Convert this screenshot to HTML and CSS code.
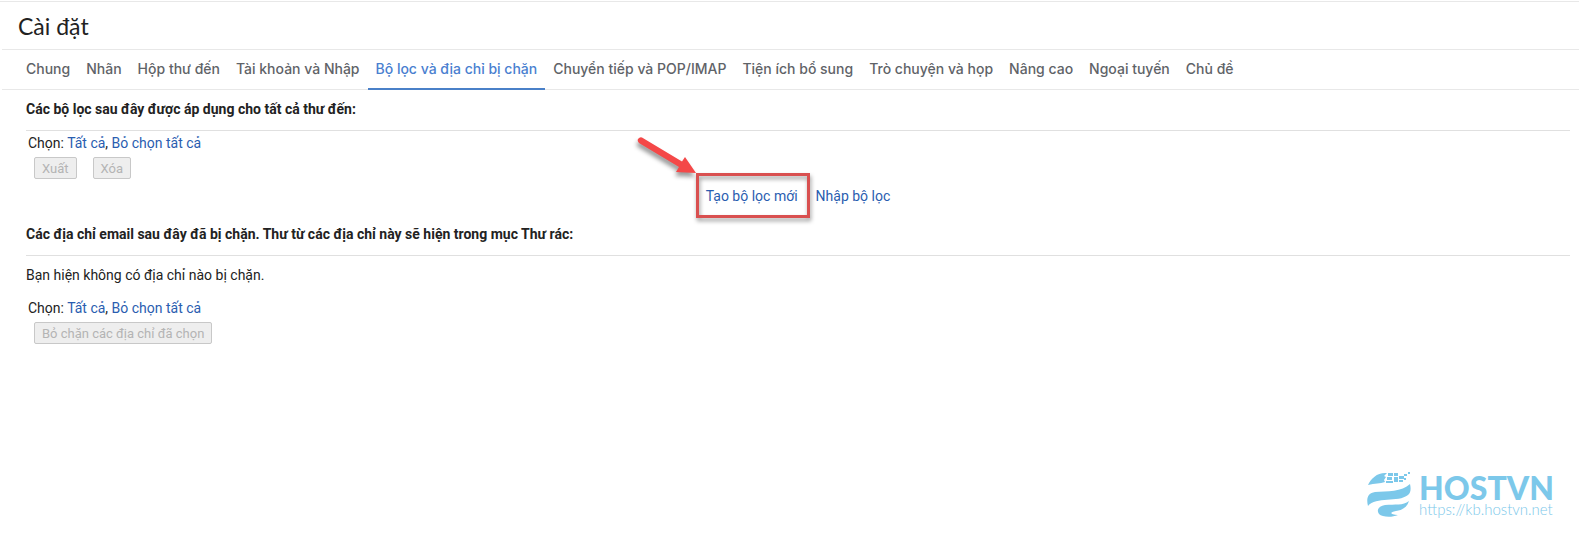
FILE: index.html
```html
<!DOCTYPE html>
<html lang="vi">
<head>
    <meta charset="UTF-8">
    <meta name="viewport" content="width=device-width, initial-scale=1.0">
    <title>Cài đặt</title>
    <link rel="stylesheet" href="styles.css">
</head>
<body>
    <div class="settings">
        <h1>Cài đặt</h1>

        <nav class="tabs">
            <a href="#chung">Chung</a>
            <a href="#nhan">Nhãn</a>
            <a href="#hop-thu">Hộp thư đến</a>
            <a href="#tai-khoan">Tài khoản và Nhập</a>
            <a href="#bo-loc" class="active">Bộ lọc và địa chỉ bị chặn</a>
            <a href="#chuyen-tiep">Chuyển tiếp và POP/IMAP</a>
            <a href="#tien-ich">Tiện ích bổ sung</a>
            <a href="#tro-chuyen">Trò chuyện và họp</a>
            <a href="#nang-cao">Nâng cao</a>
            <a href="#ngoai-tuyen">Ngoại tuyến</a>
            <a href="#chu-de">Chủ đề</a>
        </nav>

        <main>
            <section>
                <h2>Các bộ lọc sau đây được áp dụng cho tất cả thư đến:</h2>
                <div class="select-row">Chọn: <a href="#all">Tất cả</a>, <a href="#none">Bỏ chọn tất cả</a></div>
                <div class="buttons">
                    <button type="button" disabled>Xuất</button>
                    <button type="button" disabled>Xóa</button>
                </div>
                <div class="filter-links">
                    <span class="highlight">
                        <a href="#create">Tạo bộ lọc mới</a>
                        <svg class="arrow" width="64" height="48" viewBox="0 0 64 48" aria-hidden="true">
                            <path d="M6 3.500 L46 27.500 L49 23 L60 39 L40 38 L43 33 L3 9 Q1 7 2 5 Q4 2.500 6 3.500 Z" fill="#f44848"/>
                        </svg>
                    </span>
                    <a href="#import">Nhập bộ lọc</a>
                </div>
            </section>

            <section>
                <h2>Các địa chỉ email sau đây đã bị chặn. Thư từ các địa chỉ này sẽ hiện trong mục Thư rác:</h2>
                <p>Bạn hiện không có địa chỉ nào bị chặn.</p>
                <div class="select-row">Chọn: <a href="#all-blocked">Tất cả</a>, <a href="#none-blocked">Bỏ chọn tất cả</a></div>
                <div class="buttons">
                    <button type="button" disabled>Bỏ chặn các địa chỉ đã chọn</button>
                </div>
            </section>
        </main>
    </div>

    <footer class="brand">
        <svg width="44" height="46" viewBox="0 0 44 46" aria-hidden="true">
            <g fill="#7cc8ea">
                <path d="M1 13 C4 6 11 0 20 1 L17 4 L19 5 L17 8 L18 10 C13 12 8 11 1 13 Z"/>
                <path d="M1 34 C-1 26 1 21 8 20 C20 19 35 20 43 12 C44 16 44 21 41 23 C31 31 9 24 1 34 Z"/>
                <path d="M12 42 C9 38 12 34 18 33 C28 32 36 34 42 29 C40 35 36 38 29 39 C22 40 23 43 31 43 C24 46 15 45 12 42 Z"/>
                <path d="M21 1h5v3h-5z M27 1h4v3h-4z M20 5h5v3h-5z M19 9h7v2h-7z M27 5h4v5h-4z M32 4h5v3h-5z M32 8h4v2h-4z M37 2h3v2h-3z M37 6h2v2h-2z M41 0h2v2h-2z"/>
            </g>
        </svg>
        <div>
            <div class="brand-name">HOSTVN</div>
            <a href="https://kb.hostvn.net">https://kb.hostvn.net</a>
        </div>
    </footer>
</body>
</html>
```
FILE: styles.css
```css
* {
    box-sizing: border-box;
}

body {
    margin: 0;
    background: #fff;
    color: #222;
    font-family: Roboto, "Liberation Sans", sans-serif;
    font-size: 14px;
    line-height: 20px;
}

a {
    color: #2a5db0;
    text-decoration: none;
}

.settings {
    margin-top: 1px;
    border-top: 1px solid #e8e8e8;
}

h1 {
    margin: 0 0 0 2px;
    padding: 1px 16px 0;
    border-bottom: 1px solid #e8e8e8;
    font-family: Lato, sans-serif;
    font-size: 23px;
    font-weight: 400;
    line-height: 46px;
}

.tabs {
    display: flex;
    margin-left: 2px;
    padding-left: 16px;
    border-bottom: 1px solid #e8e8e8;
}

.tabs a {
    padding: 0 8px;
    margin-bottom: -1px;
    border-bottom: 2px solid transparent;
    color: #5f6368;
    font-family: Inter, sans-serif;
    font-weight: 500;
    line-height: 38px;
    white-space: nowrap;
}

.tabs a.active {
    color: #4a80d0;
    border-bottom-color: #4a80c8;
}

main {
    padding: 0 9px 0 26px;
}

h2 {
    margin: 0;
    padding: 9px 0 11px;
    border-bottom: 1px solid #e0e0e0;
    font-size: 14px;
    font-weight: 700;
    line-height: 20px;
}

p {
    margin: 9px 0 11px;
}

.select-row {
    padding: 2px 2px 4px;
}

.buttons {
    display: flex;
    gap: 16px;
    padding-left: 8px;
}

button {
    height: 22px;
    padding: 1px 7px 0;
    border: 1px solid #c8c8c8;
    border-radius: 2px;
    background: #eee;
    color: #b4b4b4;
    font-family: inherit;
    font-size: 13px;
    line-height: 20px;
}

.filter-links {
    display: flex;
    justify-content: center;
    gap: 18px;
    padding: 7px 0 9px;
}

.highlight {
    position: relative;
}

/* red frame drawn over the link */
.highlight::after {
    content: "";
    position: absolute;
    inset: -13px -12px -12px -10px;
    border: 3px solid #d95050;
    filter: drop-shadow(1px 3px 2px rgba(0, 0, 0, 0.4));
    pointer-events: none;
}

.arrow {
    position: absolute;
    right: 100%;
    bottom: 100%;
    margin: 0 6px 4px 0;
    overflow: visible;
    filter: drop-shadow(-1px 4px 2px rgba(0, 0, 0, 0.4));
}

.brand {
    display: flex;
    justify-content: flex-end;
    align-items: center;
    gap: 8px;
    padding: 128px 25px 16px;
    color: #7cc8ea;
}

.brand-name {
    font-family: Lato, sans-serif;
    font-size: 32px;
    font-weight: 900;
    line-height: 28px;
}

.brand a {
    display: block;
    color: inherit;
    font-family: Lato, sans-serif;
    font-size: 15px;
    font-weight: 300;
    line-height: 14px;
}
```
